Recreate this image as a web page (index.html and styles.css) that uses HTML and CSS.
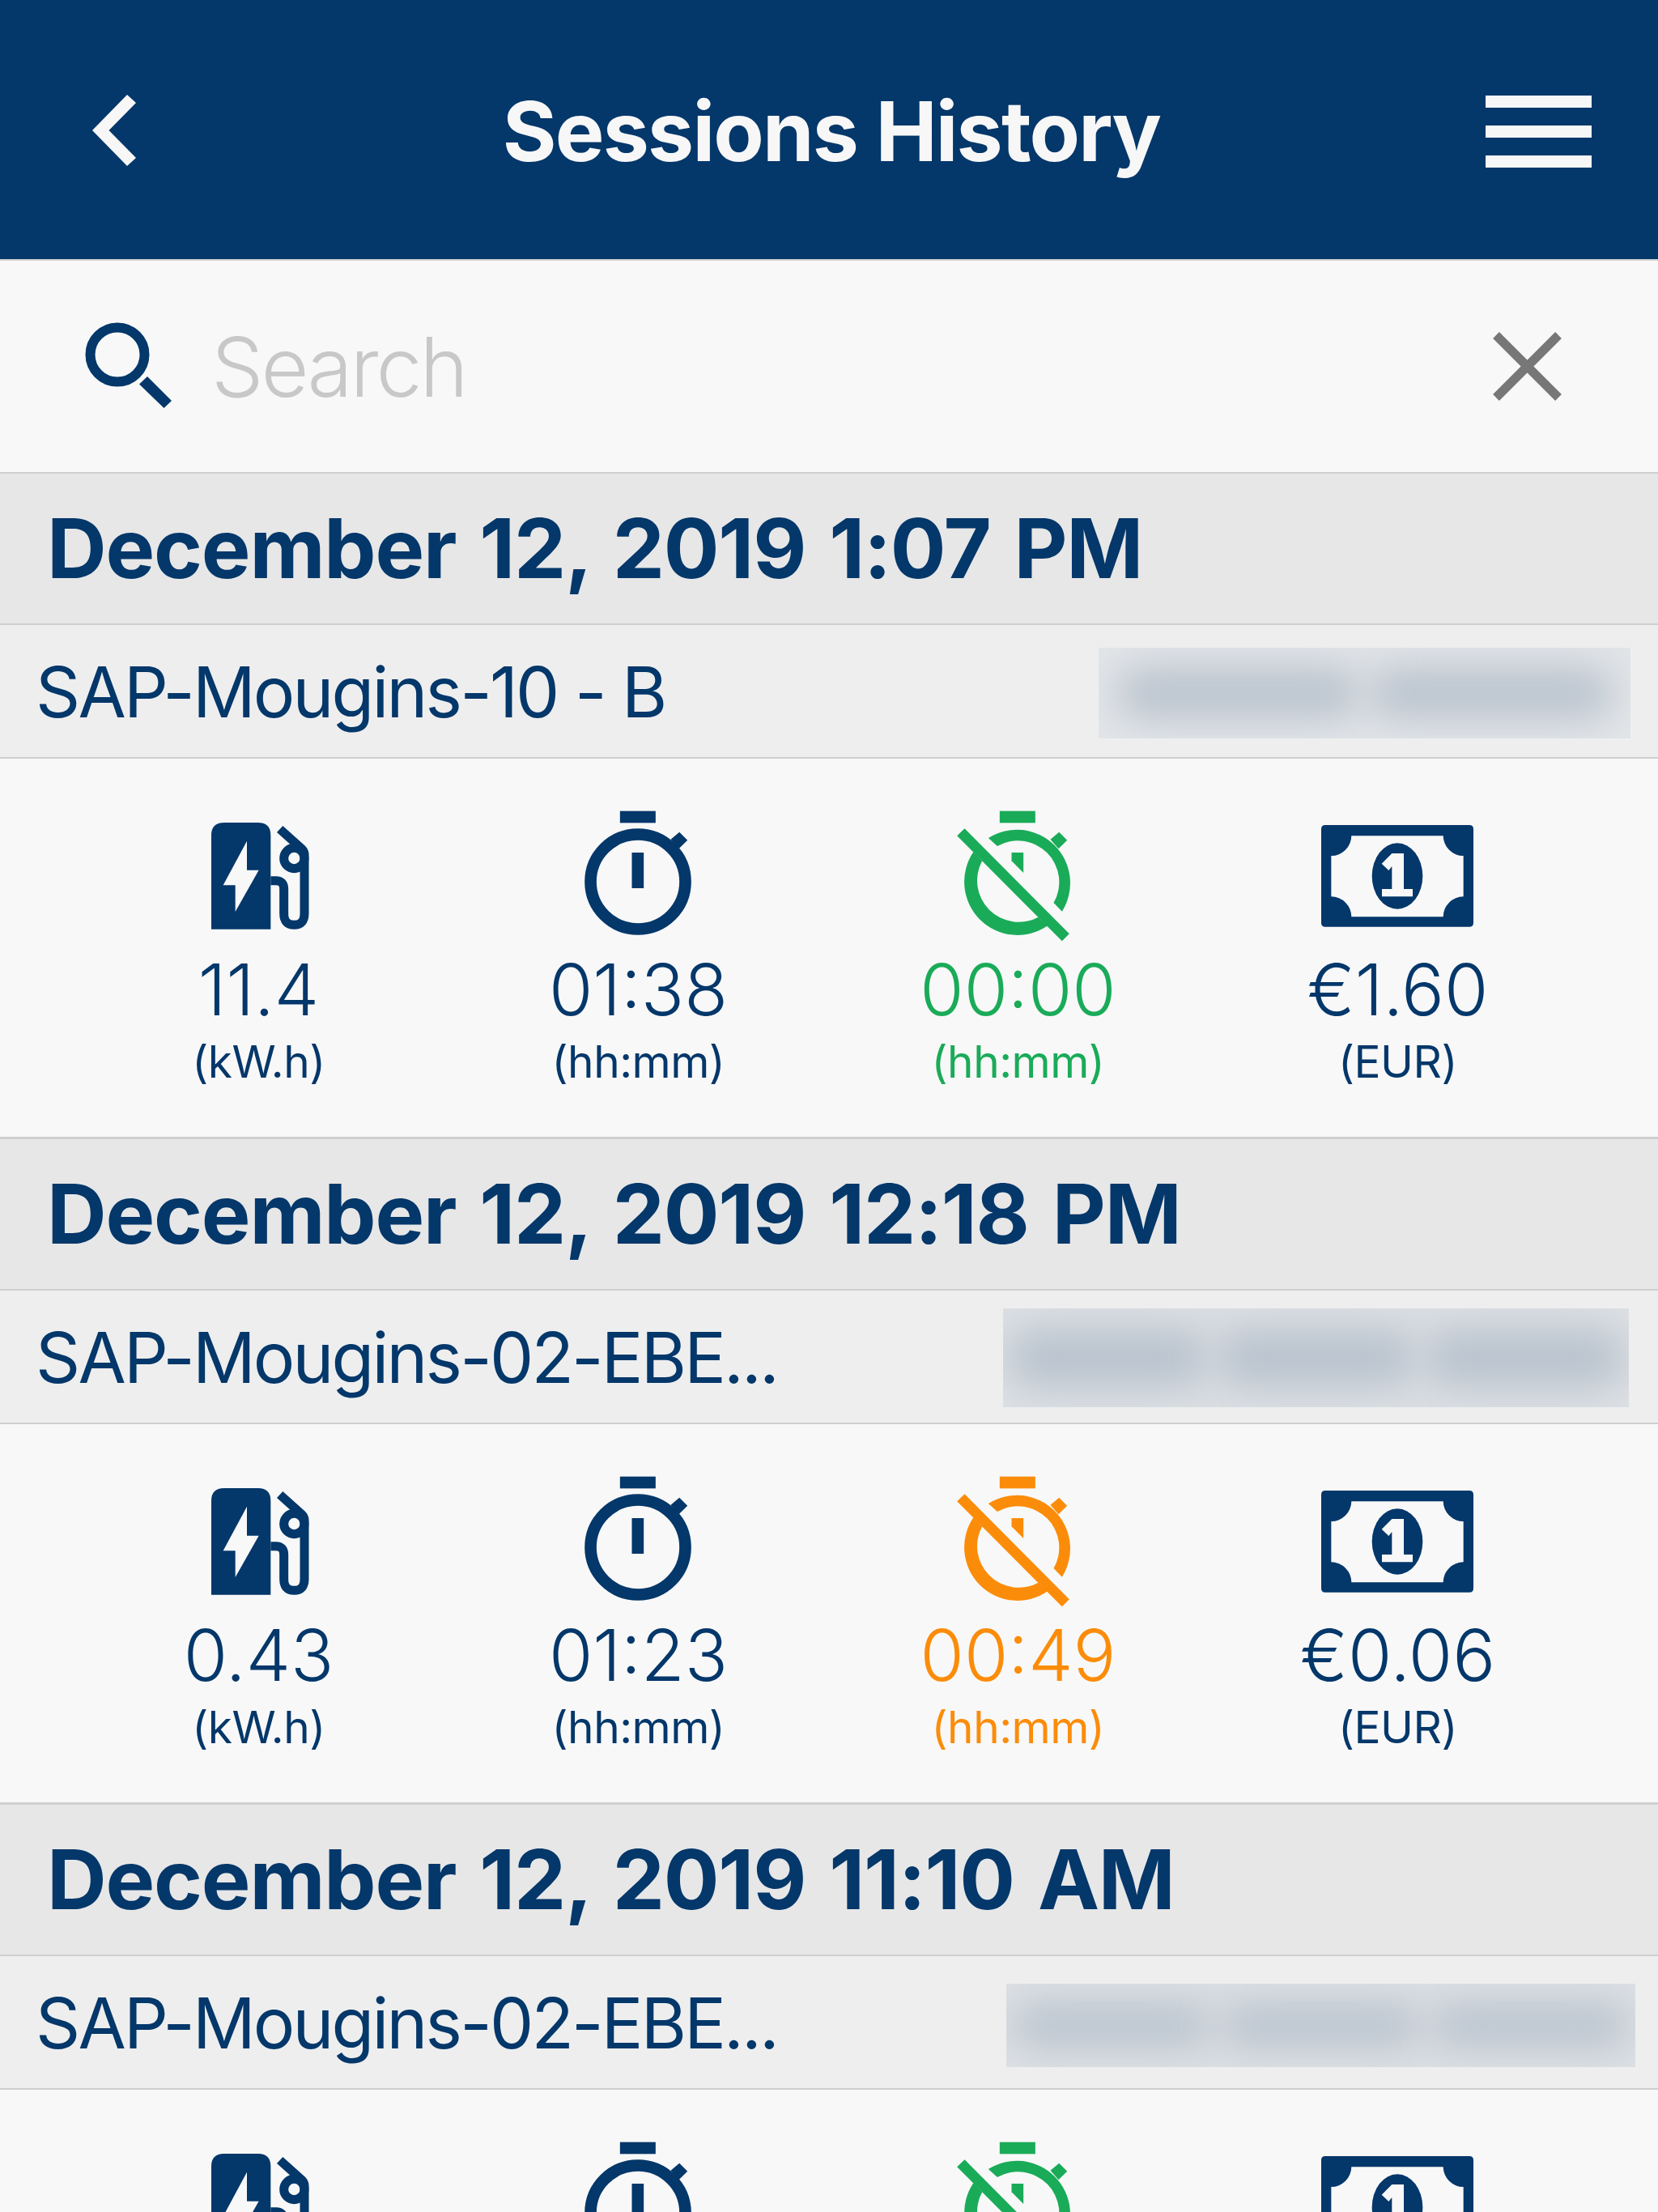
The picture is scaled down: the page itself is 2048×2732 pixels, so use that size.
FILE: index.html
```html
<!DOCTYPE html>
<html lang="en">
<head>
    <meta charset="UTF-8">
    <meta name="viewport" content="width=device-width, initial-scale=1.0">
    <title>Sessions History</title>
    <link rel="stylesheet" href="styles.css">
</head>
<body>
    <!-- shared icons, coordinates are 3x the size they are shown at -->
    <svg class="icon-defs" aria-hidden="true">
        <symbol id="icon-energy" viewBox="0 -30 540 540">
            <path fill-rule="evenodd" d="M96 443V95Q96 48 143 48H270Q316 48 316 95V443ZM228 116L140 280H185V378L272 224H228Z"/>
            <path fill="none" stroke="currentColor" stroke-width="33" d="M316 263H335Q365 263 365 295V385Q365 427 403 427Q441 427 441 385V165Q441 155 430 144L350 72"/>
            <circle cx="403" cy="180" r="38" fill="none" stroke="currentColor" stroke-width="33"/>
        </symbol>
        <symbol id="icon-timer" viewBox="23.5 0 540 540">
            <rect x="227" y="35" width="132" height="44"/>
            <circle cx="293.5" cy="297" r="175.5" fill="none" stroke="currentColor" stroke-width="44"/>
            <polygon points="415,140 447,113 477,143 445,175"/>
            <rect x="271" y="189" width="44" height="132"/>
        </symbol>
        <symbol id="icon-timer-off" viewBox="23.5 0 540 540">
            <rect x="227" y="35" width="132" height="44"/>
            <path d="M185 135A197.500 197.500 0 0 1 458 407L427 375A153.500 153.500 0 0 0 218 165Z"/>
            <path d="M130 186A197.500 197.500 0 0 0 405 460L370 428A153.500 153.500 0 0 1 162 220Z"/>
            <polygon points="415,140 447,113 477,143 445,175"/>
            <polygon points="271,189 315,189 315,264 271,220"/>
            <polygon points="97,100 485,490 458,517 69,127"/>
        </symbol>
        <symbol id="icon-money" viewBox="48 -30 600 540">
            <path fill-rule="evenodd" d="M81 57H615Q630 57 630 72V419Q630 434 615 434H81Q66 434 66 419V72Q66 57 81 57ZM178 97A75 75 0 0 1 103 171V322A75 75 0 0 1 178 397H518A75 75 0 0 1 593 322V171A75 75 0 0 1 518 97Z"/>
            <ellipse cx="348" cy="246" rx="94" ry="122"/>
            <polygon fill="#f8f8f8" points="290,200 328,162 372,162 372,294 405,294 405,322 291,322 291,294 328,294 328,210 316,225"/>
        </symbol>
    </svg>

    <header class="topbar">
        <svg class="back" viewBox="0 0 60 100"><polygon points="6,47 49,3 60,13 26.500,47 60,81 49,91"/></svg>
        <h1 class="title">Sessions History</h1>
        <div class="menu"><span></span><span></span><span></span></div>
    </header>

    <div class="search">
        <svg class="search-icon" viewBox="0 0 110 110">
            <circle cx="41" cy="41" r="33.500" fill="none" stroke="currentColor" stroke-width="12"/>
            <polygon points="78,68 108,98 98.500,107 68,77.500"/>
        </svg>
        <span class="search-text">Search</span>
        <svg class="search-clear" viewBox="0 0 85 85">
            <path d="M4 4L81 81M81 4L4 81" fill="none" stroke="currentColor" stroke-width="11"/>
        </svg>
    </div>

    <section class="session">
        <div class="session-date">December 12, 2019 1:07 PM</div>
        <div class="session-station">
            <span class="station-name">SAP-Mougins-10 - B</span>
            <div class="redacted redacted-one"><i></i><i></i></div>
        </div>
        <div class="stats">
            <div class="stat">
                <svg class="stat-icon"><use href="#icon-energy"/></svg>
                <div class="stat-value">11.4</div>
                <div class="stat-unit">(kW.h)</div>
            </div>
            <div class="stat">
                <svg class="stat-icon"><use href="#icon-timer"/></svg>
                <div class="stat-value">01:38</div>
                <div class="stat-unit">(hh:mm)</div>
            </div>
            <div class="stat green">
                <svg class="stat-icon"><use href="#icon-timer-off"/></svg>
                <div class="stat-value">00:00</div>
                <div class="stat-unit">(hh:mm)</div>
            </div>
            <div class="stat">
                <svg class="stat-icon wide"><use href="#icon-money"/></svg>
                <div class="stat-value">€1.60</div>
                <div class="stat-unit">(EUR)</div>
            </div>
        </div>
    </section>

    <section class="session">
        <div class="session-date">December 12, 2019 12:18 PM</div>
        <div class="session-station">
            <span class="station-name">SAP-Mougins-02-EBE...</span>
            <div class="redacted redacted-two"><i></i><i></i><i></i></div>
        </div>
        <div class="stats">
            <div class="stat">
                <svg class="stat-icon"><use href="#icon-energy"/></svg>
                <div class="stat-value">0.43</div>
                <div class="stat-unit">(kW.h)</div>
            </div>
            <div class="stat">
                <svg class="stat-icon"><use href="#icon-timer"/></svg>
                <div class="stat-value">01:23</div>
                <div class="stat-unit">(hh:mm)</div>
            </div>
            <div class="stat orange">
                <svg class="stat-icon"><use href="#icon-timer-off"/></svg>
                <div class="stat-value">00:49</div>
                <div class="stat-unit">(hh:mm)</div>
            </div>
            <div class="stat">
                <svg class="stat-icon wide"><use href="#icon-money"/></svg>
                <div class="stat-value">€0.06</div>
                <div class="stat-unit">(EUR)</div>
            </div>
        </div>
    </section>

    <section class="session">
        <div class="session-date">December 12, 2019 11:10 AM</div>
        <div class="session-station">
            <span class="station-name">SAP-Mougins-02-EBE...</span>
            <div class="redacted redacted-three"><i></i><i></i><i></i></div>
        </div>
        <div class="stats">
            <div class="stat">
                <svg class="stat-icon"><use href="#icon-energy"/></svg>
            </div>
            <div class="stat">
                <svg class="stat-icon"><use href="#icon-timer"/></svg>
            </div>
            <div class="stat green">
                <svg class="stat-icon"><use href="#icon-timer-off"/></svg>
            </div>
            <div class="stat">
                <svg class="stat-icon wide"><use href="#icon-money"/></svg>
            </div>
        </div>
    </section>
</body>
</html>
```

FILE: styles.css
```css
html, body {
    height: 2732px;
    overflow: hidden;
}

body {
    margin: 0;
    background-color: #f8f8f8;
    color: #04376a;
    fill: currentColor;
    font-family: Inter, "Liberation Sans", sans-serif;
}

.icon-defs {
    position: absolute;
    width: 0;
    height: 0;
}

/* top bar */
.topbar {
    height: 320px;
    border-bottom: 2px solid #d0d0d0;
    background-color: #04376a;
    color: #f7f7f7;
    display: grid;
    grid-template-columns: 1fr auto 1fr;
    align-items: center;
    padding: 0 102px 0 108px;
}

.back {
    width: 60px;
    height: 100px;
    margin-top: 8px;
}

.title {
    margin: 4px 0 0;
    font-size: 102px;
    font-weight: 700;
    letter-spacing: -1.8px;
    line-height: 120px;
}

.menu {
    justify-self: end;
    width: 131px;
    display: flex;
    flex-direction: column;
    gap: 22px;
    margin: 4px -20px 0 0;
}

.menu span {
    height: 15px;
    background-color: #f7f7f7;
}

/* search row */
.search {
    height: 261px;
    border-bottom: 2px solid #cfcfcf;
    display: flex;
    align-items: center;
    padding: 0 119px 0 104px;
}

.search-icon {
    width: 110px;
    height: 110px;
    margin-top: -2px;
}

.search-text {
    flex: 1;
    margin-left: 47px;
    font-size: 102px;
    font-weight: 300;
    color: #c8c8c8;
    letter-spacing: -3px;
}

.search-clear {
    width: 85px;
    height: 85px;
    color: #777777;
}

/* one session */
.session-date {
    height: 185px;
    border-bottom: 2px solid #cfcfcf;
    background-color: #e7e7e7;
    padding-left: 58px;
    font-size: 102px;
    font-weight: 700;
    letter-spacing: -1.2px;
    word-spacing: 6px;
    line-height: 185px;
}

.session-station {
    height: 163px;
    border-bottom: 2px solid #cfcfcf;
    background-color: #eeeeee;
    display: flex;
    justify-content: space-between;
    align-items: flex-start;
    padding-left: 44px;
}

.station-name {
    font-size: 86px;
    font-weight: 400;
    letter-spacing: -2.8px;
    line-height: 166px;
}

.redacted {
    display: flex;
    box-sizing: border-box;
    overflow: hidden;
    background-color: #e3e5e8;
}

.redacted i {
    flex: 1;
    margin: 24px 6px;
    border-radius: 30px;
    background-color: #b9c3ce;
    filter: blur(24px);
}

.redacted-one {
    width: 657px;
    height: 112px;
    margin: 28px 34px 0 0;
    padding: 0 16px;
}

.redacted-two {
    width: 773px;
    height: 122px;
    margin: 22px 36px 0 0;
    background-color: #dde0e4;
}

.redacted-three {
    width: 777px;
    height: 103px;
    margin: 34px 28px 0 0;
    background-color: #dde0e4;
}

.stats {
    height: 414px;
    border-bottom: 3px solid #cfcfcf;
    display: grid;
    grid-template-columns: repeat(4, 469px);
    padding: 53px 0 0 84px;
}

.stat {
    display: flex;
    flex-direction: column;
    align-items: center;
}

.stat-icon {
    width: 180px;
    height: 180px;
    flex: none;
}

.stat-icon.wide {
    width: 200px;
}

.stat-value {
    font-size: 88px;
    font-weight: 350;
    line-height: 104px;
    padding-left: 2px;
}

.stat-unit {
    font-size: 55px;
    font-weight: 400;
    letter-spacing: -0.5px;
    line-height: 75px;
    padding-left: 2px;
}

.green {
    color: #1aab59;
}

.orange {
    color: #fb8c0a;
}
```
